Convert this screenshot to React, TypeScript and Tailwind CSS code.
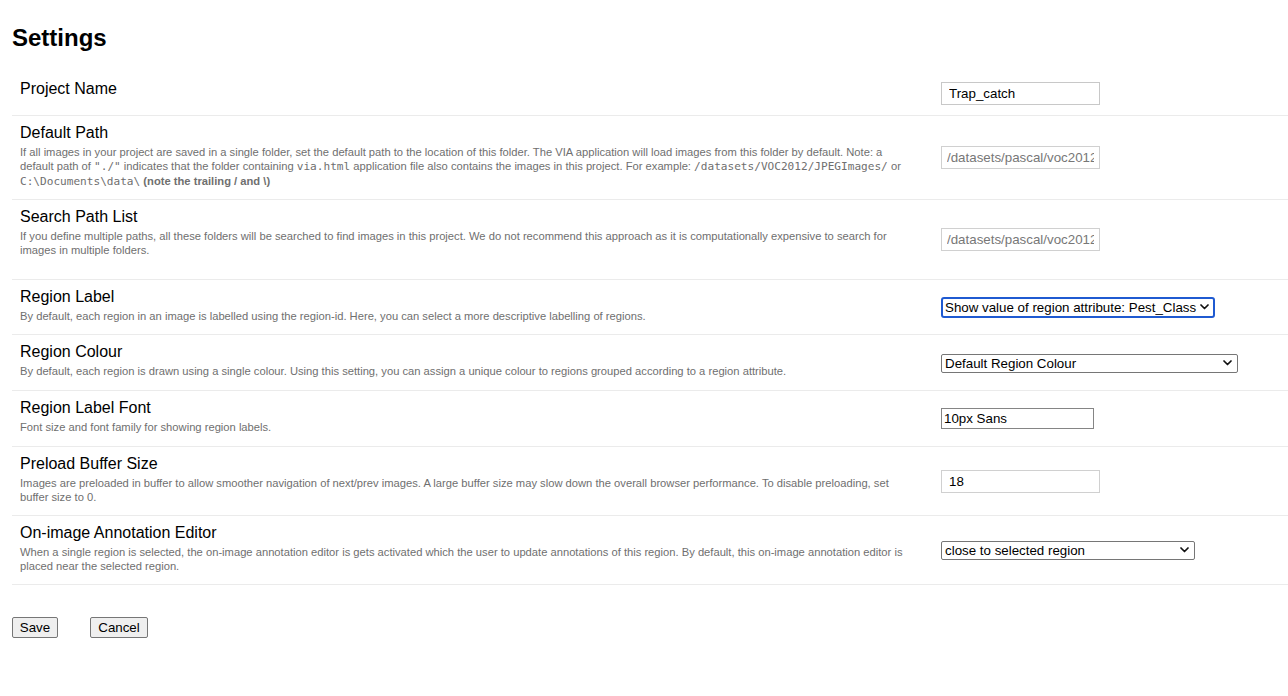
import React from "react";

const sans = { fontFamily: '"Liberation Sans", Arial, Helvetica, sans-serif' };
const mono = "font-['DejaVu_Sans_Mono',monospace] text-[11.1px]";

function Chevron() {
  return (
    <svg width="9" height="6" viewBox="0 0 9 6" className="pointer-events-none absolute right-[6px] top-1/2 -translate-y-1/2">
      <path d="M1 1 L4.5 4.5 L8 1" fill="none" stroke="#111" strokeWidth="1.7" strokeLinecap="round" strokeLinejoin="round" />
    </svg>
  );
}

function Row({
  title,
  desc,
  h,
  children,
}: {
  title: string;
  desc?: React.ReactNode;
  h: string;
  children: React.ReactNode;
}) {
  return (
    <div className={`flex border-b border-[#ebebeb] ${h}`}>
      <div className="w-[921px] shrink-0 pl-2 pr-[20px] pt-[8px]">
        <div className="text-[16px] leading-[18px] text-black">{title}</div>
        {desc && <div className="mt-[3px] text-[11.2px] leading-[14px] text-[#6f6f6f]">{desc}</div>}
      </div>
      <div className="flex flex-1 items-center pl-2">{children}</div>
    </div>
  );
}

export default function App() {
  return (
    <div className="min-h-[696px] bg-white px-3 text-black" style={sans}>
      <h2 className="pt-[22px] text-[24px] font-bold leading-[32px] mb-[18px]">Settings</h2>
      <div className="w-[1276px]">
        <Row title="Project Name" h="h-[44px]">
          <input
            defaultValue="Trap_catch"
            className="h-[23px] w-[159px] border border-[#c8c8c8] px-[7px] text-[13.333px] text-black outline-none"
          />
        </Row>
        <Row
          title="Default Path"
          h="h-[84px]"
          desc={
            <>
              If all images in your project are saved in a single folder, set the default path to the location of this folder. The VIA application will load images from this folder by default. Note: a default path of <span className={mono}>"./"</span> indicates that the folder containing <span className={mono}>via.html</span> application file also contains the images in this project. For example: <span className={mono}>/datasets/VOC2012/JPEGImages/</span> or <span className={mono}>C:\Documents\data\</span> <b>(note the trailing / and \)</b>
            </>
          }
        >
          <input
            placeholder="/datasets/pascal/voc2012/VOCdevkit/VOC2012/JPEGImages/"
            className="h-[23px] w-[159px] border border-[#d0d0d0] px-[5px] text-[13.333px] outline-none placeholder:text-[#777]"
          />
        </Row>
        <Row
          title="Search Path List"
          h="h-[80px]"
          desc="If you define multiple paths, all these folders will be searched to find images in this project. We do not recommend this approach as it is computationally expensive to search for images in multiple folders."
        >
          <input
            placeholder="/datasets/pascal/voc2012/VOCdevkit/VOC2012/JPEGImages/"
            className="h-[23px] w-[159px] border border-[#d0d0d0] px-[5px] text-[13.333px] outline-none placeholder:text-[#777]"
          />
        </Row>
        <Row
          title="Region Label"
          h="h-[55px]"
          desc="By default, each region in an image is labelled using the region-id. Here, you can select a more descriptive labelling of regions."
        >
          <div className="relative">
            <select className="h-[21px] w-[274px] appearance-none rounded-[3px] border-2 border-[#1f5ad1] bg-white pl-[2px] text-[13.333px] leading-[15px] text-black outline-none">
              <option>Show value of region attribute: Pest_Class</option>
            </select>
            <Chevron />
          </div>
        </Row>
        <Row
          title="Region Colour"
          h="h-[56px]"
          desc="By default, each region is drawn using a single colour. Using this setting, you can assign a unique colour to regions grouped according to a region attribute."
        >
          <div className="relative">
            <select className="h-[19px] w-[297px] appearance-none rounded-[2px] border border-[#767676] bg-white pl-[3px] text-[13.333px] leading-[15px] text-black outline-none">
              <option>Default Region Colour</option>
            </select>
            <Chevron />
          </div>
        </Row>
        <Row
          title="Region Label Font"
          h="h-[56px]"
          desc="Font size and font family for showing region labels."
        >
          <input
            defaultValue="10px Sans"
            className="h-[21px] w-[153px] border border-[#858585] px-[2px] text-[13.333px] text-black outline-none"
          />
        </Row>
        <Row
          title="Preload Buffer Size"
          h="h-[69px]"
          desc="Images are preloaded in buffer to allow smoother navigation of next/prev images. A large buffer size may slow down the overall browser performance. To disable preloading, set buffer size to 0."
        >
          <input
            defaultValue="18"
            className="h-[23px] w-[159px] border border-[#d0d0d0] px-[7px] text-[13.333px] text-black outline-none"
          />
        </Row>
        <Row
          title="On-image Annotation Editor"
          h="h-[69px]"
          desc="When a single region is selected, the on-image annotation editor is gets activated which the user to update annotations of this region. By default, this on-image annotation editor is placed near the selected region."
        >
          <div className="relative">
            <select className="h-[19px] w-[254px] appearance-none rounded-[2px] border border-[#767676] bg-white pl-[3px] text-[13.333px] leading-[15px] text-black outline-none">
              <option>close to selected region</option>
            </select>
            <Chevron />
          </div>
        </Row>
      </div>
      <div className="mt-[32px] flex gap-[32px]">
        <button className="h-[21px] w-[46px] rounded-[2px] border border-[#767676] bg-[#efefef] text-[13.333px] text-black">Save</button>
        <button className="h-[21px] w-[58px] rounded-[2px] border border-[#767676] bg-[#efefef] text-[13.333px] text-black">Cancel</button>
      </div>
    </div>
  );
}
